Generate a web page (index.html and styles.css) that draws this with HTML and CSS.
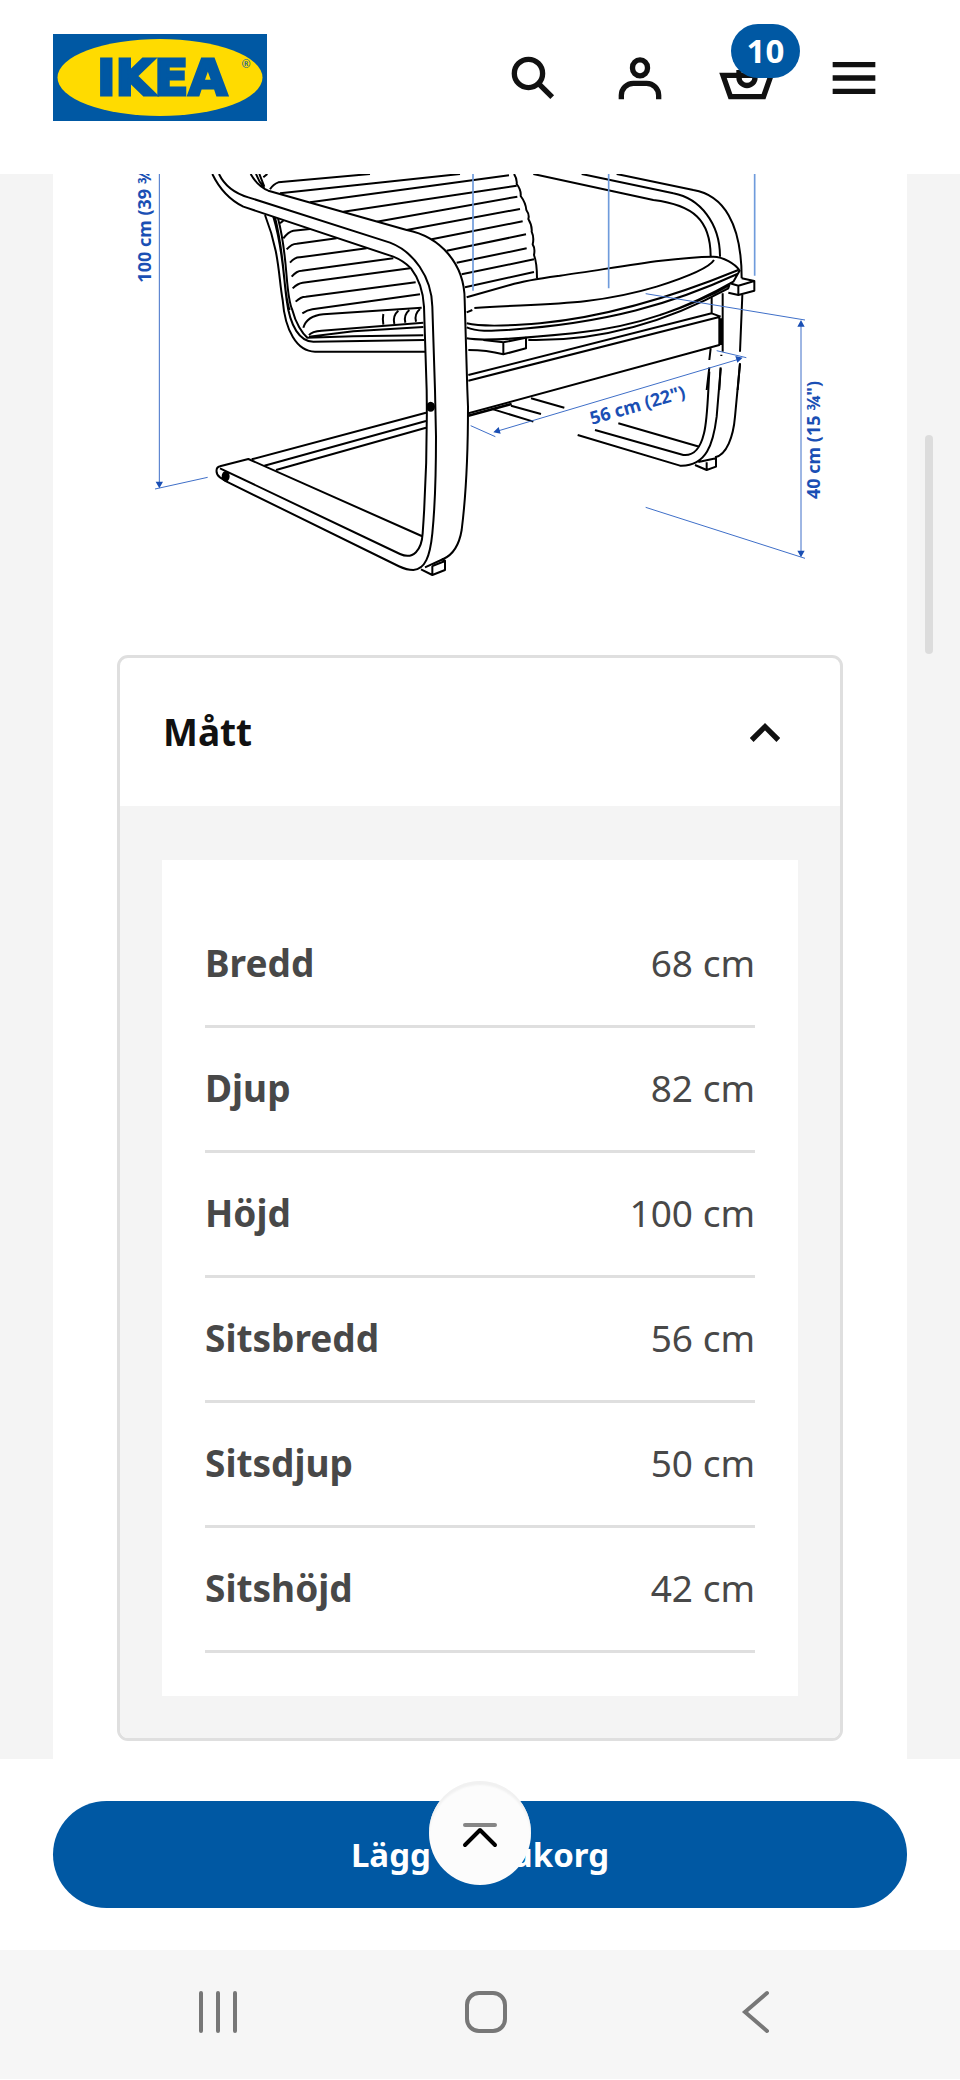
FILE: index.html
```html
<!DOCTYPE html>
<html lang="sv">
<head>
    <meta charset="utf-8">
    <meta name="viewport" content="width=device-width, initial-scale=1">
    <title>Mått - IKEA</title>
    <link rel="stylesheet" href="styles.css">
</head>
<body>
    <header class="top">
        <a class="logo" href="#" aria-label="IKEA">
            <svg viewBox="0 0 214 87">
                <rect width="214" height="87" fill="#0058a3"/>
                <ellipse cx="107" cy="43.500" rx="102.500" ry="38.500" fill="#ffdb00"/>
                <text class="logo-name" x="109" y="61">IKEA</text>
                <text class="logo-reg" x="193" y="34">®</text>
            </svg>
        </a>
        <nav class="tools">
            <button type="button" aria-label="Sök">
                <svg class="ico" viewBox="0 0 24 24"><circle cx="10.300" cy="10.300" r="5.300"/><path d="M14.200 14.200l5 5"/></svg>
            </button>
            <button type="button" aria-label="Logga in">
                <svg class="ico" viewBox="0 0 24 24"><rect x="9.200" y="5.200" width="5.600" height="6" rx="2.800"/><path d="M5 20v-1.500A4.500 4.500 0 0 1 9.500 14h5a4.500 4.500 0 0 1 4.500 4.500V20"/></svg>
            </button>
            <button type="button" aria-label="Varukorg">
                <svg class="ico" viewBox="0 0 24 24"><path d="M3 11h18l-2.800 8H5.800z"/><path d="M9 9v2.800a3 3 0 0 0 6 0V9"/></svg>
                <span class="badge">10</span>
            </button>
            <button type="button" aria-label="Meny">
                <svg class="ico" viewBox="0 0 24 24"><path d="M4 7h16M4 12h16M4 17h16"/></svg>
            </button>
        </nav>
    </header>

    <main class="page">
        <div class="sheet">
            <svg class="drawing" viewBox="159 522 2562 1443" role="img" aria-label="Måttskiss fåtölj">
                <!-- back and left side -->
                <g transform="translate(360 480)">
                    <path d="M450 88q10-16 25-21L750 42M480 100L1020 42M570 127L1167 46M670 155L1190 77M770 185L1192 110M860 210L1200 147M935 238L1208 184M980 272L1218 223M1010 308L1220 265M1025 343L1242 298M1035 382L1242 336"/>
                    <path d="M480 190l10-8M490 235q15-20 30-23L570 207M500 268q15-17 30-17L650 235M510 308q15-17 30-16L740 265M515 350q15-18 30-18L820 295M518 385q15-15 30-17L870 325M527 425q15-15 30-15L887 367M547 460q15-10 30-12L900 403"/>
                    <path d="M550 503C560 470 590 465 610 463L905 443M790 462q-3 15 0 32M835 452q-18 15-12 40M868 450q-18 15-12 38M900 447q-18 15-12 38"/>
                    <path d="M567 525C575 515 590 513 605 512L910 488M567 530L700 514L910 501M560 533L700 529L910 526"/>
                    <path d="M435 165C480 280 475 350 488 420C495 510 530 575 585 575L915 575M460 170C490 270 490 350 500 420C510 500 540 545 580 545L912 540M474 175C507 300 494 400 517 450C527 490 547 520 562 533M465 172C497 300 489 400 509 450"/>
                    <path class="fill" d="M277 42C300 90 330 120 370 140L820 290C880 315 910 360 912 440L920 690H1042L1034 420C1034 310 960 230 860 210L445 92C420 82 405 65 392 42z"/>
                    <path d="M392 42C405 65 420 82 445 92L860 210C960 230 1034 310 1034 420L1042 690M297 42C315 80 345 100 385 112L810 248C880 275 935 350 937 440L945 690M277 42C300 90 330 120 370 140L820 290Q850 302 873 325C900 360 910 400 912 440L920 690M408 42C415 62 425 75 433 84M418 42L433 80M430 52L442 42"/>
                </g>
                <!-- seat and right arm -->
                <g transform="translate(1320 480)">
                    <path d="M222 42q10 15 8 30q14 18 12 36q15 20 17 42q10 14 6 27q12 20 10 38q8 18 3 38q8 12 4 32q9 24 9 70"/>
                    <path d="M280 42L640 120C760 135 812 180 812 290M425 42L700 100C780 115 840 190 840 290M530 42L760 90C850 105 905 190 905 355"/>
                    <path d="M80 412L210 375C260 360 300 355 360 347C520 325 680 292 820 290C850 290 885 312 898 330M103 444C300 430 450 440 650 380C760 345 810 320 822 300M80 457L97 450"/>
                    <path d="M80 490C120 500 180 500 300 490C500 470 700 410 895 330M80 502C110 515 150 513 200 510C500 490 700 430 892 342M80 535C130 545 250 535 400 520C600 500 750 440 880 365L900 330M265 540C500 545 700 475 865 385L868 375M660 465C740 440 800 415 870 375"/>
                    <path d="M85 570Q140 570 190 583L258 565V533L190 547L130 540M190 547V583M870 370L895 377L943 363L905 355M943 363V392L895 405L865 398M895 377V405"/>
                    <path d="M85 645L815 460L842 470M85 662L838 471V555L55 768M815 412V460M848 400V575M907 405L900 575M812 565L808 600M844 584v4M808 622L800 690M842 622L838 690M900 610L893 690"/>
                    <path class="thick" d="M843 475V555M85 767L215 732"/>
                </g>
                <!-- right leg -->
                <g transform="translate(1350 1020)">
                    <path d="M778 95C772 200 772 240 762 280C750 330 730 348 700 345L435 270M812 85L800 230C790 310 770 380 690 377L383 285M870 70L855 230C850 290 830 345 795 352M505 250L748 320M735 375L770 390L798 380V352M770 367V390M745 366L798 355"/>
                    <path d="M130 208L250 245M183 197L273 222M243 175L343 203"/>
                </g>
                <!-- left leg and runner -->
                <g transform="translate(360 1110)">
                    <path d="M395 268L918 128M433 287L918 153M468 300L918 173"/>
                    <path class="fill" d="M920 60L1042 60L1044 110C1044 300 1035 400 1025 480C1015 540 990 560 970 567L915 592Q890 605 850 595L835 540L905 498C918 350 922 200 917 60z"/>
                    <path d="M1042 60L1044 110C1044 300 1035 400 1025 480C1015 540 990 558 970 567L915 592M945 60L948 200C948 300 946 400 937 490C930 560 915 598 880 600C860 600 850 595 835 588L320 335L300 322C286 312 286 292 300 289L385 267L905 498M300 295L840 552C880 570 905 540 908 490C918 350 922 200 920 60"/>
                    <path d="M903 598L937 615L975 600V572L965 567M937 588V615M937 588L975 573"/>
                    <ellipse class="dot" cx="932" cy="110" rx="10" ry="12"/>
                    <ellipse class="dot" cx="317" cy="319" rx="9" ry="13"/>
                </g>
                <!-- measurements -->
                <g class="dim">
                    <path class="light" d="M1419 522V872M1826 522V865M2264 522V827"/>
                    <path d="M478 522V1455M465 1467L623 1432M1937 881L2415 960M2403 970V1665M1937 1522L2415 1675M1490 1294L2222 1076M1412 1277L1486 1310M2150 1052L2239 1073"/>
                    <path class="head" d="M478 1465l-11-20h22zM2403 960l-11 20h22zM2403 1672l-11-20h22zM1480 1297l16-16 6 20zM2228 1073l-22-5 6 20z"/>
                    <text transform="translate(453 848) rotate(-90)">100 cm (39 ¾")</text>
                    <text transform="translate(1776 1274) rotate(-16)">56 cm (22")</text>
                    <text transform="translate(2460 1497) rotate(-90)">40 cm (15 ¾")</text>
                </g>
            </svg>

            <section class="card">
                <h2>
                    <button type="button" class="card-head" aria-expanded="true">
                        Mått
                        <svg class="ico chev" viewBox="0 0 24 24"><path d="M7 15l5-5 5 5"/></svg>
                    </button>
                </h2>
                <div class="card-body">
                    <div class="panel">
                        <table class="specs">
                            <tr><th scope="row">Bredd</th><td>68 cm</td></tr>
                            <tr><th scope="row">Djup</th><td>82 cm</td></tr>
                            <tr><th scope="row">Höjd</th><td>100 cm</td></tr>
                            <tr><th scope="row">Sitsbredd</th><td>56 cm</td></tr>
                            <tr><th scope="row">Sitsdjup</th><td>50 cm</td></tr>
                            <tr><th scope="row">Sitshöjd</th><td>42 cm</td></tr>
                        </table>
                    </div>
                </div>
            </section>
        </div>
        <div class="scroll"></div>
    </main>

    <div class="buy">
        <button type="button" class="add">Lägg i varukorg</button>
        <button type="button" class="totop" aria-label="Till toppen">
            <svg viewBox="0 0 40 30"><path stroke="#868686" d="M5 5h30"/><path stroke="#000" d="M5 25L20 10l15 15"/></svg>
        </button>
    </div>

    <nav class="sysnav">
        <button type="button" aria-label="Senaste"><svg viewBox="0 0 48 48"><path d="M7 5v38M24 5v38M41 5v38"/></svg></button>
        <button type="button" aria-label="Hem"><svg viewBox="0 0 48 48"><rect x="4" y="5" width="38" height="38" rx="12"/></svg></button>
        <button type="button" aria-label="Tillbaka"><svg viewBox="0 0 48 48"><path d="M35 5L13 24l22 19"/></svg></button>
    </nav>
</body>
</html>
```
FILE: styles.css
```css
* { box-sizing: border-box; }
body { margin: 0; background: #fff; color: #111; font-family: "Noto Sans", sans-serif; }
button { margin: 0; padding: 0; border: 0; background: none; color: inherit; font: inherit; cursor: pointer; }
svg { display: block; }

.top { display: flex; justify-content: space-between; align-items: center; padding: 24px 53px 43px; background: #fff; }
.logo svg { width: 214px; height: 87px; }
.logo-name { font: bold 50px "DejaVu Sans", sans-serif; text-anchor: middle; fill: #0058a3; stroke: #0058a3; stroke-width: 3px; }
.logo-reg { font: 11px "Noto Sans", sans-serif; text-anchor: middle; fill: #0058a3; }
.tools { display: flex; }
.tools button { position: relative; display: flex; align-items: center; justify-content: center; width: 107px; height: 107px; }
.ico { width: 64px; height: 64px; fill: none; stroke: #111; stroke-width: 2; }
.badge { position: absolute; top: 0; right: 0; padding: 0 14px; min-width: 69px; border-radius: 27px; background: #0058a3; color: #fff; font-size: 33px; font-weight: bold; line-height: 54px; }

.page { position: relative; padding: 0 53px; background: #f4f4f4; }
.sheet { padding-bottom: 18px; background: #fff; }
.scroll { position: absolute; top: 261px; right: 27px; width: 8px; height: 219px; border-radius: 4px; background: #dcdcdc; }

.drawing { width: 100%; height: auto; fill: none; stroke: #000; stroke-width: 6; stroke-linejoin: round; }
.drawing .fill { fill: #fff; stroke: none; }
.drawing .thick { stroke-width: 8; }
.drawing .dot { fill: #000; }
.drawing .dim { stroke: #3f6fc8; stroke-width: 3; }
.drawing .light { stroke: #6f9bdc; stroke-width: 5; }
.drawing .head { fill: #1a4fb4; stroke: none; }
.drawing text { fill: #1a4fb4; stroke: none; font-size: 54px; font-weight: bold; }

.card { margin: 0 64px; border: 3px solid #dfdfdf; border-radius: 11px; overflow: hidden; }
.card h2 { margin: 0; font-size: 37px; }
.card-head { display: flex; align-items: center; justify-content: space-between; width: 100%; padding: 42px 43px; line-height: 64px; font-weight: bold; text-align: left; }
.card-body { padding: 54px 42px 42px; background: #f4f4f4; }
.panel { padding: 43px; background: #fff; }
.specs { width: 100%; border-spacing: 0; color: #484848; font-size: 37px; line-height: 48px; }
.specs th, .specs td { padding: 36px 0 38px; border-bottom: 3px solid #dfdfdf; }
.specs th { text-align: left; }
.specs td { text-align: right; }

.buy { position: relative; padding: 42px 53px; background: #fff; }
.add { display: block; width: 100%; border-radius: 54px; background: #0058a3; color: #fff; font-size: 33px; font-weight: bold; line-height: 107px; }
.totop { position: absolute; top: 22px; left: 50%; display: flex; align-items: center; justify-content: center; width: 102px; height: 104px; margin-left: -51px; border-radius: 50%; background: #fcfcfc; box-shadow: inset 0 4px 2px #f1f1f1; }
.totop svg { width: 40px; height: 30px; margin-top: 4px; fill: none; stroke-width: 4; stroke-linecap: round; stroke-linejoin: round; }

.sysnav { display: grid; grid-template-columns: repeat(3, 1fr); justify-items: center; padding: 38px 70px 43px 83px; background: #f6f6f6; }
.sysnav svg { width: 48px; height: 48px; fill: none; stroke: #777; stroke-width: 4; stroke-linecap: round; }
```
